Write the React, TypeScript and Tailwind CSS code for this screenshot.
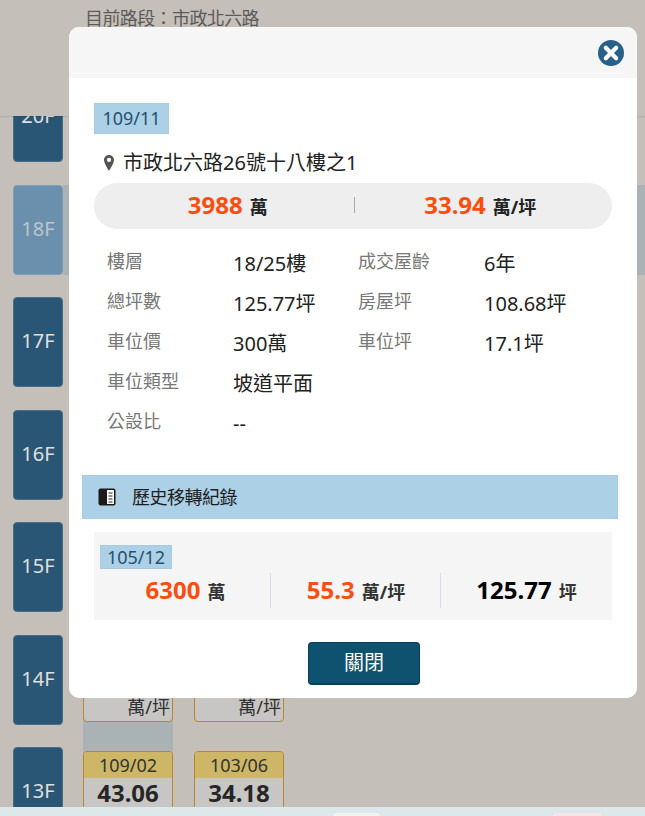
import React from "react";

const FONT = "font-['Noto_Sans','Noto_Sans_CJK_TC',sans-serif]";

const details = [
  [
    { label: "樓層", value: "18/25樓" },
    { label: "成交屋齡", value: "6年" },
  ],
  [
    { label: "總坪數", value: "125.77坪" },
    { label: "房屋坪", value: "108.68坪" },
  ],
  [
    { label: "車位價", value: "300萬" },
    { label: "車位坪", value: "17.1坪" },
  ],
  [{ label: "車位類型", value: "坡道平面" }],
  [{ label: "公設比", value: "--" }],
];

function FloorTile({ floor, faded }: { floor: string; faded?: boolean }) {
  return (
    <div
      className={`flex h-[90px] w-[50px] shrink-0 items-center justify-center rounded-[4px] border pb-[2px] text-[20px] ${
        faded ? "border-[#7f9db5] bg-[#6b90ae] text-[#bcc6cc]" : "border-[#4a6c85] bg-[#2a5676] text-[#dfe0dd]"
      }`}
    >
      {floor}
    </div>
  );
}

function PriceCard({ date, price }: { date: string; price: string }) {
  return (
    <div className="h-[70px] w-[90px] overflow-hidden rounded-t-[4px] border border-[#b8862b] bg-[#c8c6c5]">
      <div className="flex h-[26px] items-center justify-center bg-[#cdb767] text-[18px] text-[#33332f]">{date}</div>
      <div className="text-center text-[24px] font-bold leading-[30px] text-[#262626]">{price}</div>
    </div>
  );
}

function UnitCard() {
  return (
    <div className="flex h-[87px] w-[90px] items-end justify-end rounded-b-[4px] border border-[#b8862b] bg-[#c8c6c5] pr-[2px] text-[18px] leading-[28px] text-[#2f2f2f]">
      萬/坪
    </div>
  );
}

function CloseIcon() {
  return (
    <svg width="26" height="26" viewBox="0 0 26 26">
      <circle cx="13" cy="13" r="13" fill="#27608a" />
      <path d="M7.8 7.8 18.2 18.2M18.2 7.8 7.8 18.2" stroke="#fff" strokeWidth="4.2" strokeLinecap="round" />
    </svg>
  );
}

function PinIcon() {
  return (
    <svg width="10" height="16" viewBox="0 0 10 16">
      <path
        fillRule="evenodd"
        fill="#555555"
        d="M5 0C2.2 0 0 2.2 0 5c0 2.6 3.3 8.3 5 11 1.7-2.7 5-8.4 5-11 0-2.8-2.2-5-5-5Zm0 7a2.1 2.1 0 1 1 0-4.2A2.1 2.1 0 0 1 5 7Z"
      />
    </svg>
  );
}

function BookIcon() {
  return (
    <svg width="18" height="18" viewBox="0 0 18 18">
      <rect x="0.5" y="0.5" width="17" height="17" rx="2" fill="#1c1a1a" />
      <rect x="9" y="2" width="7" height="14" fill="#fff" />
      <path d="M10.5 5h4M10.5 8h4M10.5 11h4M10.5 14h4" stroke="#222" strokeWidth="1.2" />
    </svg>
  );
}

export default function App() {
  return (
    <div className={`relative h-[816px] w-[645px] overflow-hidden bg-[#c4bfb8] ${FONT}`}>
      <div className="relative z-10 h-[116px] bg-[#c4bfb8] pl-[85px] pt-[5px] text-[18px] leading-[26px] tracking-[-0.6px] text-[#5c5a58] shadow-[0_1px_1px_rgba(0,0,0,0.08)]">
        目前路段：市政北六路
      </div>

      <div className="-mt-[44px] flex flex-col pl-[13px]">
        <div className="h-[113px]">
          <FloorTile floor="20F" />
        </div>
        <div className="flex h-[112px]">
          <div className="flex h-[90px] flex-1">
            <FloorTile floor="18F" faded />
            <div className="flex-1 bg-[#aab2b5]" />
          </div>
        </div>
        <div className="h-[113px]">
          <FloorTile floor="17F" />
        </div>
        <div className="h-[112px]">
          <FloorTile floor="16F" />
        </div>
        <div className="h-[113px]">
          <FloorTile floor="15F" />
        </div>
        <div className="flex h-[112px] gap-[20px]">
          <FloorTile floor="14F" />
          <div className="h-full w-[90px] bg-[#aab2b5]">
            <UnitCard />
          </div>
          <div className="ml-[1px]">
            <UnitCard />
          </div>
        </div>
        <div className="flex h-[69px] gap-[20px]">
          <FloorTile floor="13F" />
          <div className="h-full w-[90px] bg-[#aab2b5] pt-[4px]">
            <PriceCard date="109/02" price="43.06" />
          </div>
          <div className="ml-[1px] pt-[4px]">
            <PriceCard date="103/06" price="34.18" />
          </div>
        </div>
      </div>

      <div className="absolute inset-x-0 bottom-0 z-20 flex h-[9px] bg-[#dce8ea] pl-[333px] pt-[6px]">
        <div className="h-[3px] w-[47px] rounded-t-[4px] bg-[#f2f4f4]" />
        <div className="ml-[173px] h-[3px] w-[48px] rounded-t-[4px] bg-[#f8e6e6]" />
      </div>

      <div className="absolute left-[69px] top-[27px] z-30 h-[671px] w-[568px] overflow-hidden rounded-[10px] bg-white">
        <div className="flex h-[51px] items-center justify-end bg-[#f6f6f6] pr-[13px]">
          <CloseIcon />
        </div>

        <div className="px-[25px] pt-[25px]">
          <div className="flex h-[31px] w-[75px] items-center justify-center border border-[#a6cbe2] bg-[#acd0e6] text-[18px] text-[#25506f]">
            109/11
          </div>

          <div className="mt-[16px] flex h-[26px] items-center gap-[9px] pl-[10px] text-[20px] text-[#222222]">
            <PinIcon />
            <span>市政北六路26號十八樓之1</span>
          </div>

          <div className="mt-[7px] flex h-[46px] items-center rounded-full bg-[#eeeeee] pb-[2px]">
            <div className="flex flex-1 items-baseline justify-center gap-[7px] pl-[8px]">
              <span className="text-[24px] font-bold text-[#fb4d0c]">3988</span>
              <span className="text-[18px] font-bold text-[#222222]">萬</span>
            </div>
            <div className="h-[16px] w-px bg-[#aaaaaa]" />
            <div className="flex flex-1 items-baseline justify-center gap-[7px] pr-[6px]">
              <span className="text-[24px] font-bold text-[#fb4d0c]">33.94</span>
              <span className="text-[18px] font-bold text-[#222222]">萬/坪</span>
            </div>
          </div>

          <div className="mt-[14px] flex flex-col pl-[13px]">
            {details.map((row) => (
              <div key={row[0].label} className="grid h-[40px] grid-cols-[126px_125px_126px_1fr]">
                {row.map((cell) => (
                  <React.Fragment key={cell.label}>
                    <div className="pt-[4px] text-[18px] leading-[28px] text-[#777777]">{cell.label}</div>
                    <div className="pt-[7px] text-[20px] leading-[28px] text-[#222222]">{cell.value}</div>
                  </React.Fragment>
                ))}
              </div>
            ))}
          </div>
        </div>

        <div className="ml-[13px] mr-[19px] mt-[32px] flex h-[44px] items-center gap-[16px] border border-[#a6cbe2] bg-[#acd0e6] pl-[15px] text-[18px] tracking-[-0.5px] text-[#1c1c1c]">
          <BookIcon />
          <span>歷史移轉紀錄</span>
        </div>

        <div className="mx-[25px] mt-[13px] h-[88px] bg-[#f5f5f5] pl-[6px] pt-[13px]">
          <div className="flex h-[24px] w-[72px] items-center justify-center border border-[#a6cbe2] bg-[#acd0e6] text-[18px] text-[#25506f]">
            105/12
          </div>
          <div className="mt-[4px] grid h-[35px] grid-cols-[171px_170px_1fr] items-center">
            <div className="flex h-full items-baseline justify-center gap-[7px] border-r border-[#dcdce6] pl-[1px]">
              <span className="text-[24px] font-bold leading-[33px] text-[#fb4d0c]">6300</span>
              <span className="text-[18px] font-bold text-[#333333]">萬</span>
            </div>
            <div className="flex h-full items-baseline justify-center gap-[7px] border-r border-[#dcdce6] pl-[1px]">
              <span className="text-[24px] font-bold leading-[33px] text-[#fb4d0c]">55.3</span>
              <span className="text-[18px] font-bold text-[#333333]">萬/坪</span>
            </div>
            <div className="flex h-full items-baseline justify-center gap-[7px]">
              <span className="text-[24px] font-bold leading-[33px] text-black">125.77</span>
              <span className="text-[18px] font-bold text-[#333333]">坪</span>
            </div>
          </div>
        </div>

        <div className="ml-[239px] mt-[22px]">
          <button className="h-[43px] w-[112px] rounded-[4px] border border-b-2 border-[#0a3f5c] bg-[#0f526f] text-[20px] text-white">
            關閉
          </button>
        </div>
      </div>
    </div>
  );
}
